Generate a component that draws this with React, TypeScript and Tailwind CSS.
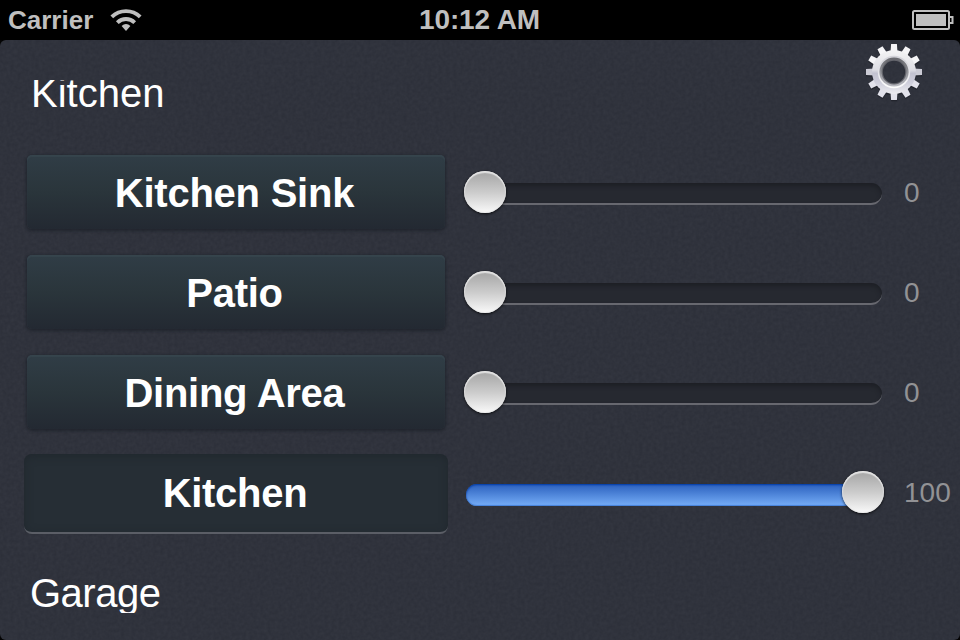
import React from "react";

const FONT = "font-['Liberation_Sans',Arial,sans-serif]";

function Wifi() {
  return (
    <svg width="32" height="24" viewBox="0 0 32 24" fill="none" stroke="#bfbfbf">
      <path d="M1.8 8.9C9.8 1.2 22.2 1.2 30.2 8.9" strokeWidth="3.9" />
      <path d="M7.3 14.6C12.3 9.8 19.7 9.8 24.7 14.6" strokeWidth="3.9" />
      <path d="M11.6 18.1C14.2 15.4 17.8 15.4 20.4 18.1L16 23Z" fill="#bfbfbf" stroke="none" />
    </svg>
  );
}

function Battery() {
  return (
    <svg width="42" height="20" viewBox="0 0 42 20">
      <rect x="1" y="1" width="36" height="18" rx="1.5" fill="none" stroke="#bfbfbf" strokeWidth="2" />
      <rect x="4" y="4" width="30" height="12" fill="#bfbfbf" />
      <path d="M38 7h2.5v6H38" fill="none" stroke="#bfbfbf" strokeWidth="2" />
    </svg>
  );
}

const TEETH = [0, 30, 60, 90, 120, 150, 180, 210, 240, 270, 300, 330];

function Gear() {
  return (
    <svg width="60" height="62" viewBox="-30 -30 60 62">
      <defs>
        <linearGradient id="metal" x1="0" y1="0" x2="0" y2="1">
          <stop offset="0" stopColor="#f4f4f5" />
          <stop offset="0.45" stopColor="#dedee4" />
          <stop offset="0.53" stopColor="#c2c2d0" />
          <stop offset="0.75" stopColor="#cfcfdc" />
          <stop offset="1" stopColor="#ececf0" />
        </linearGradient>
        <linearGradient id="ring" x1="0" y1="0" x2="0" y2="1">
          <stop offset="0" stopColor="#66676c" />
          <stop offset="0.5" stopColor="#909197" />
          <stop offset="1" stopColor="#b9bac1" />
        </linearGradient>
        <linearGradient id="rim" x1="0" y1="0" x2="0" y2="1">
          <stop offset="0" stopColor="#d2d2d8" />
          <stop offset="0.5" stopColor="#e4e4e9" />
          <stop offset="1" stopColor="#ffffff" />
        </linearGradient>
        <mask id="bore">
          <rect x="-30" y="-30" width="60" height="62" fill="white" />
          <circle r="11.2" fill="black" />
        </mask>
      </defs>
      <g mask="url(#bore)">
        <g fill="#191b22" opacity="0.55" transform="translate(0 1.3)">
          <circle r="22.2" />
          {TEETH.map((a) => (
            <path key={a} d="M-3.7 -19L-3 -28H3L3.7 -19Z" transform={`rotate(${a})`} />
          ))}
        </g>
        {TEETH.map((a) => (
          <path
            key={a}
            d="M-3.6 -19L-2.9 -28H2.9L3.6 -19Z"
            transform={`rotate(${a})`}
            fill={a === 90 || a === 270 ? "#cbcbd5" : a > 90 && a < 270 ? "#e2e2eb" : "#f5f5f7"}
          />
        ))}
        <circle r="22" fill="url(#metal)" />
        <circle r="16.2" fill="url(#rim)" />
        <circle r="14.6" fill="url(#ring)" />
        <circle r="12.4" fill="#64656c" />
      </g>
    </svg>
  );
}

function Grain() {
  return (
    <svg className="pointer-events-none absolute inset-0 h-full w-full opacity-[0.025]">
      <filter id="grain" x="0" y="0" width="100%" height="100%" colorInterpolationFilters="sRGB">
        <feTurbulence type="fractalNoise" baseFrequency="0.28" numOctaves="2" seed="4" />
        <feColorMatrix values="1.4 0 0 0 -0.2  1.4 0 0 0 -0.2  1.4 0 0 0 -0.2  0 0 0 0 1" />
      </filter>
      <rect width="100%" height="100%" filter="url(#grain)" />
    </svg>
  );
}

function Knob() {
  return (
    <div className="relative z-10 h-[42px] w-[42px] shrink-0 rounded-full bg-linear-to-b from-[#a4a4a4] via-[#cbcbcb] to-[#fafafa] shadow-[0_1px_3px_rgba(0,0,0,0.75),inset_0_2px_1px_rgba(235,235,235,0.8),inset_0_0_1px_1px_rgba(225,225,225,0.6)]" />
  );
}

function Slider({ on }: { on: boolean }) {
  return on ? (
    <div className="flex h-[42px] w-[420px] items-center pl-[2px]">
      <div className="mt-[5px] h-[22px] w-[396px] rounded-l-full bg-linear-to-b from-[#2b60bd] to-[#77aef8] shadow-[inset_0_1px_2px_#003ba6,inset_0_-1px_1px_#4c87dc]" />
      <div className="-ml-[20px]">
        <Knob />
      </div>
    </div>
  ) : (
    <div className="flex h-[42px] w-[420px] items-center">
      <Knob />
      <div className="mt-[4px] -ml-[21px] h-[22px] w-[397px] rounded-r-[11px] border-b-2 border-[#67686f] bg-[#262930] shadow-[inset_0_3px_4px_#1d1f25]" />
    </div>
  );
}

function Light({ name, value }: { name: string; value: number }) {
  const on = value > 0;
  return (
    <div className="flex h-[100px] items-center">
      {on ? (
        <div className="mt-[3px] ml-6 flex h-20 w-[424px] items-center justify-center rounded-lg border-b-2 border-[#5b5e66] bg-[#262e35] pr-[2px] shadow-[inset_0_2px_8px_#20272d]">
          <span className="text-[40px] leading-[44px] font-bold tracking-[-0.3px] text-white">{name}</span>
        </div>
      ) : (
        <div className="ml-[27px] flex h-[74px] w-[418px] items-center justify-center rounded-[5px] bg-linear-to-b from-[#303d46] via-[#2a353b] to-[#232932] pr-[3px] shadow-[0_1px_3px_1px_rgba(24,29,37,0.6),inset_0_2px_1px_#36444c]">
          <span className="mt-[2px] text-[40px] leading-[44px] font-bold tracking-[-0.25px] text-white">{name}</span>
        </div>
      )}
      <div className={on ? "ml-[16px]" : "ml-[19px]"}>
        <Slider on={on} />
      </div>
      <span className="mt-px ml-[20px] text-[28px] leading-8 text-[#929295]">{value}</span>
    </div>
  );
}

export default function App() {
  return (
    <div className={`flex h-[640px] w-[960px] flex-col overflow-hidden bg-black ${FONT}`}>
      <header className="grid h-10 shrink-0 grid-cols-3 items-center text-[#bfbfbf]">
        <div className="flex items-center gap-[17px] pl-2">
          <span className="text-[26px] leading-8 font-bold">Carrier</span>
          <Wifi />
        </div>
        <span className="pr-px text-center text-[28px] leading-8 font-bold tracking-[-0.1px]">10:12 AM</span>
        <div className="flex justify-end pr-[6px]">
          <Battery />
        </div>
      </header>
      <main className="relative h-[600px] rounded-[6px] bg-[#2e313b]">
        <Grain />
        <div className="relative">
          <div className="flex h-[103px] items-start justify-between">
            <div className="mt-10 ml-[31px] h-[34px] overflow-hidden">
              <h2 className="-mt-[10px] text-[40px] leading-[46px] text-white">Kitchen</h2>
            </div>
            <div className="mt-[2px] mr-[36px]">
              <Gear />
            </div>
          </div>
          <div className="-mt-px">
            <Light name="Kitchen Sink" value={0} />
            <Light name="Patio" value={0} />
            <Light name="Dining Area" value={0} />
            <Light name="Kitchen" value={100} />
          </div>
          <div className="mt-[28px] ml-[30px] h-[43px] overflow-hidden">
            <h2 className="text-[40px] leading-[46px] tracking-[-0.5px] text-white">Garage</h2>
          </div>
        </div>
      </main>
    </div>
  );
}
